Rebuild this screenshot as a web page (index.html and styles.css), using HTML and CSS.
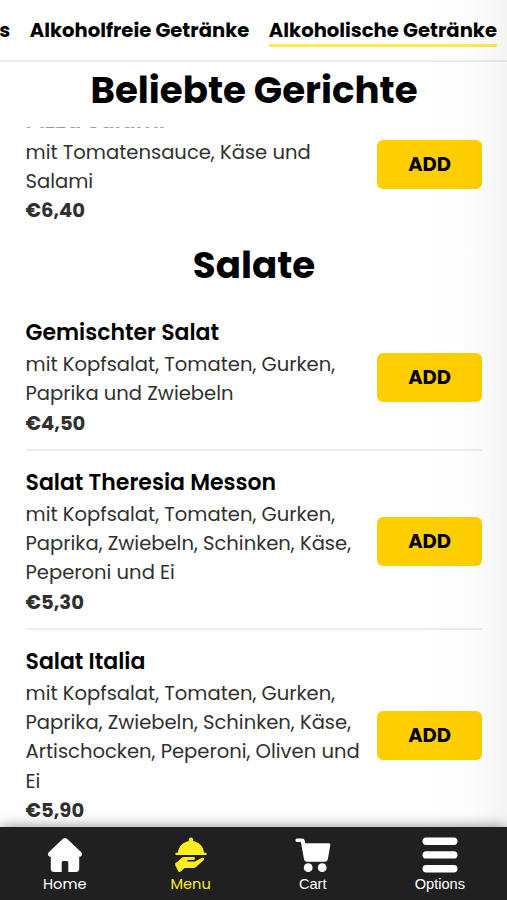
FILE: index.html
```html
<!DOCTYPE html>
<html lang="de">
<head>
<meta charset="utf-8">
<title>Menu</title>
<link rel="stylesheet" href="styles.css">
</head>
<body>
<nav class="tabs">
  <span class="tab">s</span>
  <span class="tab tab-free">Alkoholfreie Getränke</span>
  <span class="tab active">Alkoholische Getränke</span>
</nav>
<main class="menu">
  <h2 class="heading pinned"><span>Beliebte Gerichte</span></h2>
  <section class="list scrolled">
    <article class="dish">
      <div class="info"><h3>Pizza Salami</h3><p>mit Tomatensauce, Käse und<br>Salami</p><b>€6,40</b></div>
      <button class="add">ADD</button>
    </article>
  </section>
  <h2 class="heading salads"><span>Salate</span></h2>
  <section class="list">
    <article class="dish">
      <div class="info"><h3>Gemischter Salat</h3><p>mit Kopfsalat, Tomaten, Gurken,<br>Paprika und Zwiebeln</p><b>€4,50</b></div>
      <button class="add">ADD</button>
    </article>
    <article class="dish">
      <div class="info"><h3>Salat Theresia Messon</h3><p>mit Kopfsalat, Tomaten, Gurken,<br>Paprika, Zwiebeln, Schinken, Käse,<br>Peperoni und Ei</p><b>€5,30</b></div>
      <button class="add">ADD</button>
    </article>
    <article class="dish">
      <div class="info"><h3>Salat Italia</h3><p>mit Kopfsalat, Tomaten, Gurken,<br>Paprika, Zwiebeln, Schinken, Käse,<br>Artischocken, Peperoni, Oliven und<br>Ei</p><b>€5,90</b></div>
      <button class="add">ADD</button>
    </article>
  </section>
</main>
<footer class="bar">
  <a class="item home">
    <svg viewBox="0 0 36 36"><path d="M16 1.8Q18 .3 20 1.8L34.3 15.2Q35.8 17 34.8 18.5Q34 19.7 32.2 19.7V31.5Q32.2 35 28.8 35H21.3V25.5Q21.3 24 19.8 24H16.2Q14.7 24 14.7 25.5V35H7.2Q3.8 35 3.8 31.5V19.7Q2 19.7 1.2 18.5Q.2 17 1.7 15.2Z"/></svg>
    <span>Home</span>
  </a>
  <a class="item current">
    <svg viewBox="0 0 36 36"><path d="M16.2 4A2.2 2.2 0 1 1 19.8 4C26 5 30.7 9.5 31 15.8H33.5V18H2.5V15.8H5C5.3 9.5 10 5 16.2 4ZM2.3 26L5.2 24.2L8.5 20.9Q9.6 20 11 20H20.5Q22 20 22 21.4T20.5 22.9H14.5V24.4H22L28.5 21Q30.4 20.2 31 21.5Q31.4 22.5 30.3 23.6L23 30Q22 31 20.5 31H11.5L7.5 34.8L5.8 35L2.2 28.5Z"/></svg>
    <span>Menu</span>
  </a>
  <a class="item cart">
    <svg viewBox="0 0 36 36"><path d="M2 1.4H7.2Q9.2 1.4 9.6 3.3L10.3 6.3H33.7Q35.7 6.3 35.3 8.4L32.8 22.2Q32.4 24.8 29.7 24.8H12.1Q9.5 24.8 9 22.2L5.9 5H2Q.4 5 .4 3.2T2 1.4Z"/><circle cx="13.2" cy="30.7" r="4.4"/><circle cx="27.2" cy="30.7" r="4.4"/></svg>
    <span>Cart</span>
  </a>
  <a class="item options">
    <svg viewBox="0 0 36 36"><rect x=".5" y=".5" width="35" height="7.4" rx="3.7"/><rect x=".5" y="14.2" width="35" height="7.4" rx="3.7"/><rect x=".5" y="28" width="35" height="7.4" rx="3.7"/></svg>
    <span>Options</span>
  </a>
</footer>
<div class="edge-shade"></div>
</body>
</html>
```

FILE: styles.css
```css
* { box-sizing: border-box; }
body {
  margin: 0;
  height: 900px;
  display: flex;
  flex-direction: column;
  overflow: hidden;
  background: #fff;
  color: #000;
  font-family: Poppins, Inter, sans-serif;
}
h2, h3, p { margin: 0; }
.tabs {
  flex: none;
  height: 62px;
  display: flex;
  justify-content: flex-end;
  align-items: flex-start;
  gap: 19.5px;
  padding: 15px 10px 0 0;
  border-bottom: 2px solid #ececec;
  white-space: nowrap;
  font-size: 19.58px;
  font-weight: 700;
  line-height: 31px;
}
.tab { height: 32px; }
.active { border-bottom: 3px solid #fbec50; }
.menu { flex: 1; min-height: 0; overflow: hidden; }
.heading {
  padding-left: 1px;
  text-align: center;
  font-size: 37.2px;
  font-weight: 700;
  line-height: 56px;
}
.pinned {
  position: relative;
  z-index: 1;
  height: 65px;
  background: #fff;
  box-shadow: 0 2px 0 rgba(255, 255, 255, .6);
}
.salads { height: 65px; margin-top: -2px; }
.list { padding: 0 25px 0 25.5px; }
.scrolled { margin-top: -38px; }
.dish {
  display: flex;
  align-items: center;
  justify-content: space-between;
  padding: 16.5px 0 11.3px;
  border-bottom: 2px solid #ededed;
}
.scrolled .dish { border-color: transparent; }
.info {
  white-space: nowrap;
  color: #303030;
  font-size: 19.56px;
  line-height: 29.3px;
}
.info h3 {
  height: 32px;
  color: #000;
  font-size: 22px;
  font-weight: 600;
  line-height: 30px;
}
.info b { display: block; }
.add {
  flex: none;
  width: 105px;
  height: 49px;
  margin-bottom: 2px;
  padding: 0;
  border: 0;
  border-radius: 6px;
  background: #ffcf00;
  color: #000;
  font: 700 19.5px Poppins, Inter, sans-serif;
}
.bar {
  position: relative;
  z-index: 3;
  flex: none;
  height: 73px;
  display: flex;
  justify-content: space-between;
  padding: 10px 42px 0 43px;
  background: #202020;
  box-shadow: 0 -2px 12px -1px rgba(0, 0, 0, .4);
  color: #fff;
}
.item {
  display: flex;
  flex-direction: column;
  align-items: center;
  font: 14.6px/20px Poppins, Inter, sans-serif;
}
.item svg { width: 36px; height: 36px; margin-bottom: 1px; fill: currentColor; }
.cart, .options { font-family: "Liberation Sans", sans-serif; }
.current { color: #ffec21; }
.edge-shade {
  position: absolute;
  z-index: 2;
  top: 0;
  right: 0;
  width: 90px;
  height: 827px;
  pointer-events: none;
  background: linear-gradient(to right, transparent, rgba(0, 0, 0, .012) 65%, rgba(0, 0, 0, .045));
}
```
